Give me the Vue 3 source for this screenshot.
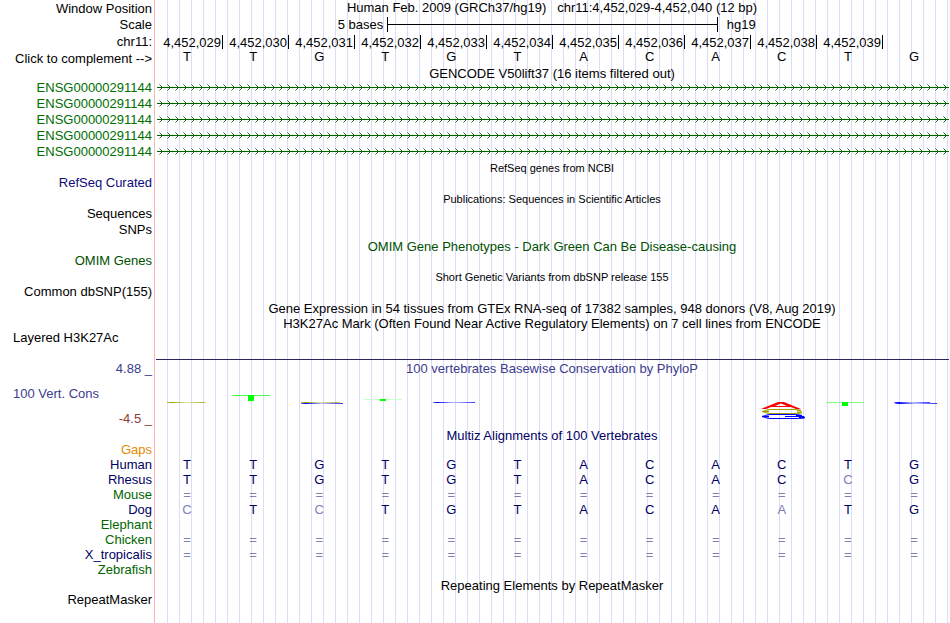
<script setup>
const start = 4452029
const reference = 'TTGTGTACACTG'.split('')
const position = 'Human Feb. 2009 (GRCh37/hg19)   chr11:4,452,029-4,452,040 (12 bp)'

const positions = reference.slice(0, -1).map((base, i) => (start + i).toLocaleString('en-US'))

const transcripts = Array(5).fill('ENSG00000291144')

const tracks = [
  { title: 'RefSeq genes from NCBI', small: true, labels: ['RefSeq Curated'], color: 'blue' },
  { title: 'Publications: Sequences in Scientific Articles', small: true, labels: ['Sequences', 'SNPs'], color: 'black' },
  { title: 'OMIM Gene Phenotypes - Dark Green Can Be Disease-causing', labels: ['OMIM Genes'], color: 'omim' },
  { title: 'Short Genetic Variants from dbSNP release 155', small: true, labels: ['Common dbSNP(155)'], color: 'black' },
]

// bases that differ from human are drawn lighter
const species = [
  { name: 'Gaps', color: 'orange', bases: '' },
  { name: 'Human', color: 'navy', bases: 'TTGTGTACACTG' },
  { name: 'Rhesus', color: 'navy', bases: 'TTGTGTACACCG' },
  { name: 'Mouse', color: 'green', bases: '============' },
  { name: 'Dog', color: 'navy', bases: 'CTCTGTACAATG' },
  { name: 'Elephant', color: 'green', bases: '' },
  { name: 'Chicken', color: 'green', bases: '============' },
  { name: 'X_tropicalis', color: 'navy', bases: '============' },
  { name: 'Zebrafish', color: 'green', bases: '' },
]
</script>

<template>
  <main class="browser">
    <div class="row first">
      <div class="label">Window Position</div>
      <div class="title position">{{ position }}</div>
    </div>
    <div class="row">
      <div class="label">Scale</div>
      <div class="scale">
        <span class="bases-text">5 bases</span>
        <span class="bar"></span>
        <span class="assembly">hg19</span>
      </div>
    </div>
    <div class="row ruler-row">
      <div class="label">chr11:</div>
      <div class="ruler">
        <span v-for="pos in positions" :key="pos">{{ pos }}</span>
      </div>
    </div>
    <div class="row complement">
      <div class="label">Click to complement --&gt;</div>
      <div class="bases">
        <span v-for="(base, i) in reference" :key="i">{{ base }}</span>
      </div>
    </div>

    <div class="row head">
      <div class="title">GENCODE V50lift37 (16 items filtered out)</div>
    </div>
    <div v-for="(name, i) in transcripts" :key="'t' + i" class="row">
      <div class="label gene">{{ name }}</div>
      <svg class="intron" width="100%" height="16">
        <defs>
          <pattern :id="'arrows' + i" width="8" height="16" patternUnits="userSpaceOnUse">
            <path d="M2.5 4.5 L5.5 7.5 L2.5 10.5" fill="none" stroke="#006400" stroke-width="0.9" />
          </pattern>
        </defs>
        <rect width="100%" height="16" :fill="`url(#arrows${i})`" />
        <rect y="7" width="100%" height="1" fill="#006400" />
      </svg>
    </div>

    <template v-for="track in tracks" :key="track.title">
      <div class="row head">
        <div class="title" :class="[{ small: track.small }, track.small ? 'black' : track.color]">{{ track.title }}</div>
      </div>
      <div v-for="label in track.labels" :key="label" class="row">
        <div class="label" :class="track.color">{{ label }}</div>
      </div>
    </template>

    <div class="row head">
      <div class="title">Gene Expression in 54 tissues from GTEx RNA-seq of 17382 samples, 948 donors (V8, Aug 2019)</div>
    </div>
    <div class="row head">
      <div class="title">H3K27Ac Mark (Often Found Near Active Regulatory Elements) on 7 cell lines from ENCODE</div>
    </div>
    <div class="row layered">
      <div class="label left">Layered H3K27Ac</div>
      <div class="baseline"></div>
    </div>

    <div class="row first">
      <div class="label slate">4.88 _</div>
      <div class="title slate">100 vertebrates Basewise Conservation by PhyloP</div>
    </div>
    <div class="row cons">
      <div class="cons-labels">
        <div class="label left slate">100 Vert. Cons</div>
        <div class="label brown">-4.5 _</div>
      </div>
      <svg class="logo" viewBox="154 377 796 50" preserveAspectRatio="none">
        <defs>
          <linearGradient id="fadeOlive">
            <stop offset="0" stop-color="#a0a000" stop-opacity="0.7" />
            <stop offset="0.1" stop-color="#a0a000" />
            <stop offset="0.5" stop-color="#a0a000" stop-opacity="0.3" />
            <stop offset="0.9" stop-color="#a0a000" stop-opacity="0.8" />
            <stop offset="1" stop-color="#a0a000" stop-opacity="0.1" />
          </linearGradient>
          <linearGradient id="fadeBlue">
            <stop offset="0" stop-color="#0000ff" stop-opacity="0.5" />
            <stop offset="0.1" stop-color="#0000ff" />
            <stop offset="0.5" stop-color="#0000ff" stop-opacity="0.25" />
            <stop offset="1" stop-color="#0000ff" stop-opacity="0.8" />
          </linearGradient>
        </defs>
        <rect x="167" y="402" width="40" height="1" fill="url(#fadeOlive)" />
        <rect x="232" y="395" width="38" height="1" fill="#4dff4d" />
        <rect x="248" y="395" width="6" height="6" fill="#00ff00" />
        <rect x="301" y="402" width="40" height="1" fill="url(#fadeOlive)" />
        <rect x="301" y="403" width="42" height="1" fill="url(#fadeBlue)" />
        <rect x="364" y="399" width="38" height="1" fill="#ccffcc" />
        <rect x="380" y="399" width="6" height="2" fill="#00ff00" />
        <rect x="433" y="402" width="42" height="1" fill="url(#fadeBlue)" />
        <path d="M761 409 L778 402 H784 L801 409 H796 L791 407 H771 L766 409 Z M775 406 H787 L781 403.4 Z" fill="#ff0000" fill-rule="evenodd" />
        <g fill="none">
          <path d="M801 411 Q800 409.5 795 409.5 H770 Q765 410 763 411.5 Q765 413 770 413.5 H795 Q801 413.5 802 412" stroke="#a0a000" />
          <path d="M762 411.5 H769 M797 410.5 H801 M797 412.5 H802" stroke="#a0a000" stroke-width="1.4" />
          <path d="M802 416 Q800 414.5 794 414.5 H770 Q765 415 763 416.5 Q765 418 770 418.5 H796 L804 418 M785 416.5 H804" stroke="#0000ff" />
          <path d="M762 416.5 H769 M796 415.5 H802 M799 417.5 H805" stroke="#0000ff" stroke-width="1.6" />
        </g>
        <rect x="826" y="402" width="38" height="1" fill="#80ff80" />
        <rect x="842" y="402" width="6" height="4" fill="#00ff00" />
        <rect x="894" y="402" width="36" height="1" fill="url(#fadeBlue)" />
        <rect x="895" y="403" width="42" height="1" fill="url(#fadeBlue)" />
      </svg>
    </div>

    <div class="row head">
      <div class="title navy">Multiz Alignments of 100 Vertebrates</div>
    </div>
    <div v-for="animal in species" :key="animal.name" class="row head">
      <div class="label" :class="animal.color">{{ animal.name }}</div>
      <div class="bases navy">
        <span v-for="(base, i) in animal.bases" :key="i" :class="{ differs: base !== reference[i] }">{{ base }}</span>
      </div>
    </div>

    <div class="row head">
      <div class="title">Repeating Elements by RepeatMasker</div>
    </div>
    <div class="row">
      <div class="label">RepeatMasker</div>
    </div>
  </main>
</template>

<style>
body {
  margin: 0;
  background: #fff;
}
</style>

<style scoped>
.browser {
  box-sizing: border-box;
  min-height: 100vh;
  font-family: "Liberation Sans", Arial, Helvetica, sans-serif;
  font-size: 13px;
  color: #000;
  background:
    linear-gradient(#ffb4b4, #ffb4b4) 154px 0 / 1px 100% no-repeat,
    repeating-linear-gradient(to right, transparent 0 11px, #dcdcf8 11px 12px) 156px 0 / 100% 100% no-repeat;
}

.row {
  display: grid;
  grid-template-columns: 154px minmax(0, 1fr);
  align-items: center;
  height: 16px;
  line-height: 16px;
  white-space: nowrap;
}

.first {
  height: 17px;
}

.ruler-row {
  height: 18px;
}

.complement {
  height: 14px;
}

.complement .bases {
  align-self: start;
  line-height: 12px;
}

.head {
  height: 15px;
  line-height: 15px;
}

.label {
  grid-column: 1;
  padding-right: 2px;
  text-align: right;
}

.left {
  padding-left: 13px;
  text-align: left;
}

.title {
  grid-column: 2;
  padding-top: 1px;
  text-align: center;
}

.position {
  align-self: start;
  padding-top: 0;
  line-height: 15px;
  white-space: pre;
}

.small {
  font-size: 11px;
}

.scale {
  display: grid;
  grid-template-columns: 7fr 10fr 7fr;
  margin: 0 1px 0 2px;
}

.bases-text {
  padding-right: 4px;
  text-align: right;
}

.bar {
  height: 15px;
  border: solid #000;
  border-width: 0 1px;
  background: linear-gradient(#000, #000) 0 7px / 100% 1px no-repeat;
}

.assembly {
  padding-left: 9px;
}

.ruler,
.bases {
  display: grid;
  grid-template-columns: repeat(12, minmax(0, 1fr));
}

.ruler {
  margin: 0 1px 0 3px;
}

.ruler span {
  height: 14px;
  padding-right: 1px;
  border-right: 1px solid #000;
  text-align: right;
}

.bases {
  margin-right: 3px;
  text-align: center;
}

.intron {
  display: block;
  box-sizing: border-box;
  padding: 0 1px 0 3px;
}

.layered {
  height: 30px;
  align-items: start;
}

.baseline {
  height: 29px;
  margin: 0 1px 0 2px;
  border-bottom: 1px solid #28285a;
}

.cons {
  height: 50px;
}

.cons-labels {
  display: flex;
  flex-direction: column;
  justify-content: space-between;
  box-sizing: border-box;
  height: 50px;
  padding-top: 9px;
}

.logo {
  display: block;
  width: 100%;
  height: 50px;
}

.black {
  color: #000;
}

.gene {
  color: #006e00;
}

.green {
  color: #006400;
}

.omim {
  color: #005000;
}

.blue {
  color: #0c0c78;
}

.navy {
  color: #000064;
}

.slate {
  color: #3c3c8c;
}

.brown {
  color: #8c3c3c;
}

.orange {
  color: #e68a00;
}

.differs {
  color: #8080b4;
}
</style>
